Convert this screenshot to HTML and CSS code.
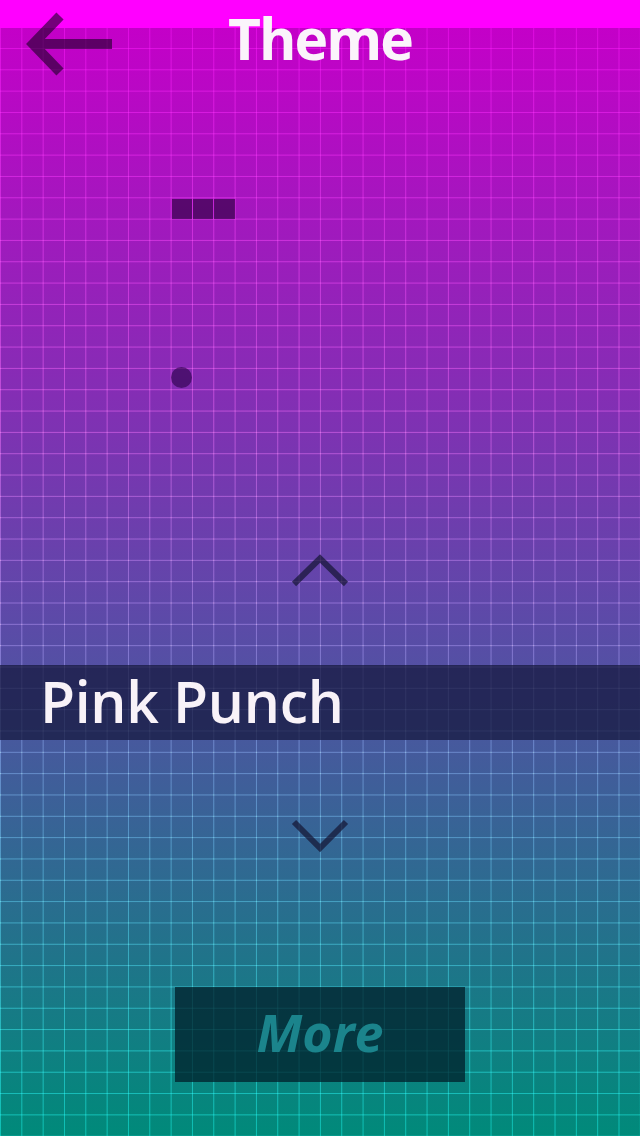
FILE: index.html
```html
<!DOCTYPE html>
<html lang="en">
<head>
<meta charset="utf-8">
<title>Theme</title>
<link rel="stylesheet" href="styles.css">
</head>
<body>
<div class="screen">
  <header class="header">
    <div class="header-left">
      <svg class="back" width="90" height="64" viewBox="0 0 90 64" aria-label="Back">
        <path d="M36 4 L9 32 L36 60 M9 32 L88 32" fill="none" stroke="#1e0028" stroke-width="10" stroke-opacity="0.62"/>
      </svg>
    </div>
    <h1 class="title">Theme</h1>
    <div class="header-right"></div>
  </header>

  <div class="pieces">
    <span class="cell"></span><span class="cell"></span><span class="cell"></span>
  </div>

  <div class="dot-row"><span class="dot"></span></div>

  <svg class="chevron chevron-up" width="60" height="40" viewBox="0 0 60 40">
    <polyline points="4,33 30,7.5 56,33" fill="none" stroke="#141432" stroke-opacity="0.7" stroke-width="6"/>
  </svg>

  <div class="band"><span class="band-text">Pink Punch</span></div>

  <svg class="chevron chevron-down" width="60" height="40" viewBox="0 0 60 40">
    <polyline points="4,8 30,34 56,8" fill="none" stroke="#141432" stroke-opacity="0.7" stroke-width="6"/>
  </svg>

  <button class="more">More</button>
</div>
</body>
</html>
```

FILE: styles.css
```css
html, body {
  margin: 0;
  padding: 0;
}

body {
  width: 640px;
  height: 1136px;
  overflow: hidden;
  font-family: "Open Sans", "Noto Sans", "DejaVu Sans", sans-serif;
}

.screen {
  width: 640px;
  height: 1136px;
  display: flex;
  flex-direction: column;
  background-color: #008878;
  background-image:
    linear-gradient(#ff00ff, #ff00ff),
    linear-gradient(to right, rgba(255, 255, 255, 0.05) 1px, transparent 1px),
    linear-gradient(to bottom, rgba(255, 255, 255, 0.05) 1px, transparent 1px),
    linear-gradient(to right, rgba(255, 255, 255, 0.45) 1px, transparent 1px),
    linear-gradient(to bottom, rgba(255, 255, 255, 0.45) 1px, transparent 1px),
    linear-gradient(to bottom, #c800cc 0px, #c400c8 28px, #5c4aa8 620px, #008a7a 1136px);
  background-size:
    100% 28px,
    21.3333px 21.3333px,
    21.3333px 21.3333px,
    21.3333px 21.3333px,
    21.3333px 21.3333px,
    100% 100%;
  background-position:
    0 0,
    0 0,
    0 5.3333px,
    0 0,
    0 5.3333px,
    0 0;
  background-repeat: no-repeat, repeat, repeat, repeat, repeat, no-repeat;
  background-blend-mode: normal, normal, normal, overlay, overlay, normal;
}

.header {
  height: 80px;
  display: grid;
  grid-template-columns: 1fr auto 1fr;
  align-items: start;
}

.header-left {
  padding: 12px 0 0 24px;
}

.back {
  display: block;
}

.title {
  margin: 0;
  font-size: 57px;
  font-weight: 700;
  line-height: 76px;
  color: #fbf4fb;
  letter-spacing: -2px;
}

.pieces {
  margin-top: 118.7px;
  padding-left: 171.67px;
  display: flex;
  gap: 1px;
  height: 20.33px;
}

.cell {
  width: 20.33px;
  height: 20.33px;
  background: rgba(40, 0, 60, 0.62);
}

.dot-row {
  margin-top: 148px;
  padding-left: 171px;
  height: 21px;
}

.dot {
  display: block;
  width: 21px;
  height: 21px;
  border-radius: 50%;
  background: rgba(40, 0, 70, 0.6);
}

.chevron {
  display: block;
  align-self: center;
}

.chevron-up {
  margin-top: 163px;
}

.band {
  margin-top: 74px;
  height: 75px;
  background: rgba(22, 24, 62, 0.74);
  padding-left: 40px;
  box-sizing: border-box;
}

.band-text {
  font-size: 57px;
  font-weight: 600;
  line-height: 72px;
  color: #f8f2f8;
  letter-spacing: -0.3px;
}

.chevron-down {
  margin-top: 74px;
}

.more {
  margin-top: 133px;
  align-self: center;
  width: 290px;
  height: 95px;
  border: none;
  padding: 0 0 6px 0;
  background: rgba(0, 30, 40, 0.74);
  color: #1b848c;
  font-family: "Open Sans", "Noto Sans", "DejaVu Sans", sans-serif;
  font-size: 52px;
  font-weight: 700;
  font-style: italic;
  line-height: 89px;
}
```
